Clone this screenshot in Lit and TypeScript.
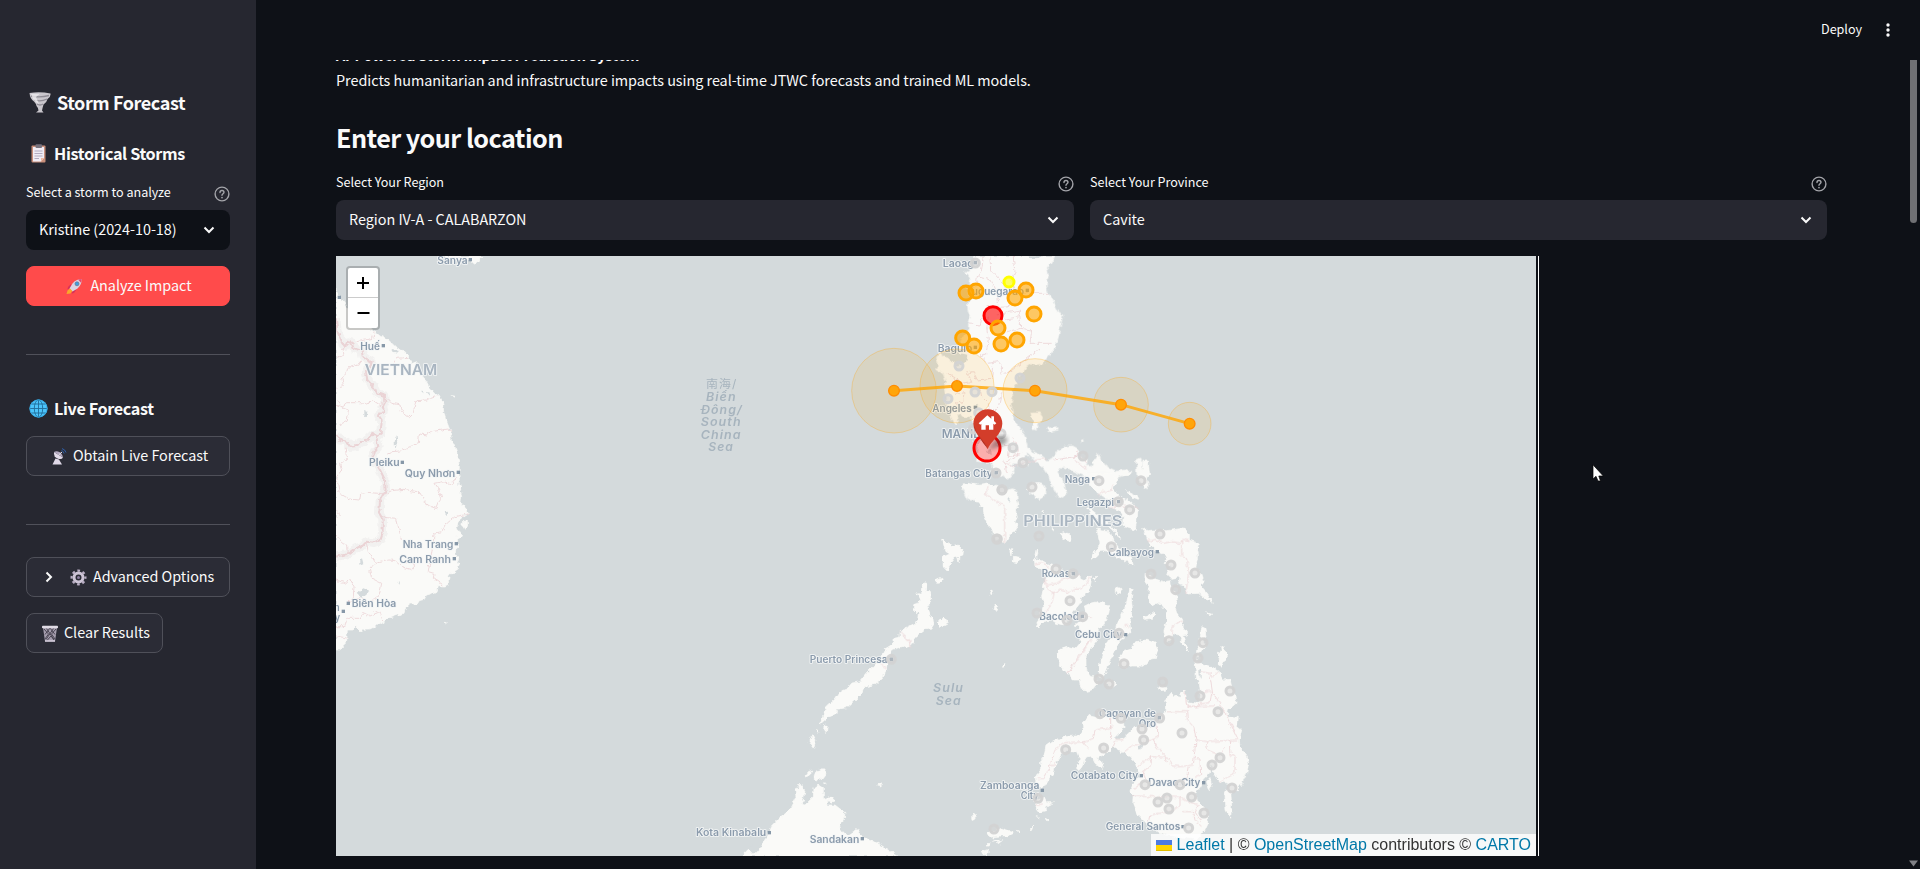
import { LitElement, html, svg, css } from "lit";
import { customElement, property } from "lit/decorators.js";

type Label = [number, number, number, string];
type Pt = [number, number];

interface Sheet {
  ox: number;
  oy: number;
  land: string[];
  water?: string[];
  borders?: string[];
  thick?: string[];
  labels: Label[];
  dots: Pt[];
  rings: Pt[];
}

/* Each sheet covers one part of the map in third-of-a-pixel units. */
const indochina: Sheet = {
  ox: 330, oy: 250,
  land: [
    "18,118 24,135 36,148 44,160 60,190 84,208 110,225 122,240 135,245 150,258 175,270 196,290 212,300 222,302 237,318 234,328 243,342 262,334 258,350 270,362 280,385 288,392 300,415 315,432 328,436 336,452 342,462 340,480 346,505 356,530 362,545 364,575 374,585 376,598 384,620 388,650 387,675 388,690 384,703 396,712 390,722 395,740 393,758 403,768 407,778 415,790 397,802 385,812 381,830 390,848 398,858 381,866 377,856 380,872 386,880 384,895 376,902 378,915 386,925 382,934 388,944 380,955 376,970 358,972 355,990 356,1005 345,1011 322,1010 318,1024 306,1030 290,1034 283,1048 268,1052 262,1062 240,1062 228,1070 222,1090 205,1094 180,1103 150,1122 120,1137 98,1138 92,1146 80,1130 66,1140 52,1140 50,1176 38,1188 30,1200 18,1200",
    "345,18 452,18 452,34 442,32 432,40 424,34 400,24 370,26 345,24",
    "398,815 412,812 413,828 404,838 396,826",
    "366,437 374,438 370,442", "343,1116 349,1118 346,1124",
  ],
  water: ["188,300 205,303 200,311 190,308", "80,1030 100,1015 118,1022 108,1036 94,1040", "103,482 112,486 110,500 103,495", "273,422 287,424 280,430", "290,425 300,428 297,434", "194,575 199,555 202,575 196,600", "205,1006 207,994 210,996", "88,930 96,925 100,940 88,944", "344,786 352,785 350,796"],
  borders: [
    "80,275 128,265 132,245", "18,325 40,318 35,300 60,280", "18,415 40,410 36,385 60,348 85,342 95,330",
    "18,465 35,470 50,458 95,458 110,462 130,452 150,465 160,458", "20,450 40,475 55,480 52,510 25,525",
    "165,440 185,460 210,465 215,485 235,500 250,485 258,452 290,450 325,437", "172,610 185,605 210,603 240,590 265,580 268,552 290,555 305,545 335,540 355,537 362,545",
    "190,340 200,325 235,322", "45,590 50,628 28,640 35,660 20,680 28,730 60,748 90,750 92,730 115,727 165,732 185,722 220,718 262,725 280,740 290,765 318,775 325,758 335,745 325,715 315,700 340,695 365,702 380,680",
    "160,802 200,805 205,830 215,870", "415,792 375,800 345,825 335,845 312,850 310,880 295,965 312,970 310,985 340,1005",
    "108,875 115,905 138,940 118,955 125,985 145,995 155,1000 148,1035 138,1048", "138,940 180,930 195,932 215,950 250,960 250,940 230,935", "18,990 50,1000 60,985 72,1010 70,1040 50,1060 80,1050 90,1040 105,1048 110,1058 140,1045",
    "18,1130 45,1130 50,1105 90,1105 100,1088 120,1098 150,1085 158,1110", "18,1158 50,1164", "18,782 28,792 20,803", "18,855 35,875 50,885 52,915",
  ],
  thick: [
    "18,205 22,245 38,280 45,290 52,275 65,278 72,295 95,302 98,318 125,338 108,365 112,390 135,415 140,430 165,437 166,455 158,470 163,485 145,495 155,510 152,550 138,560 145,590 130,608 132,630 150,660 165,690 167,720 150,750 148,790 158,808 158,850 152,868 130,878 110,875 95,890 78,895 55,912 18,920",
    "18,555 30,570 50,575 60,590 80,588 90,576 105,575 130,552 148,558",
  ],
  labels: [[322, 42, 91, "Sanya"], [91, 299, 59, "Huế"], [117, 649, 92, "Pleiku"], [224, 681, 152, "Quy Nhơn"], [218, 894, 152, "Nha Trang"], [208, 938, 155, "Cam Ranh"], [65, 1072, 134, "Biên Hòa"], [12, 1082, 17, "n"], [14, 1112, 16, "y"]],
  dots: [[421, 29], [28, 142], [160, 287], [217, 637], [385, 667], [379, 881], [373, 926], [55, 1060], [40, 1084]],
  rings: [],
};

const luzon: Sheet = {
  ox: 840, oy: 250,
  land: [
    "404,18 400,38 392,52 388,66 374,64 386,74 392,92 388,112 392,135 383,160 385,185 393,200 386,222 385,240 368,262 360,285 342,300 345,312 372,312 382,320 378,336 365,338 352,348 345,336 328,332 318,318 306,320 302,306 290,322 296,345 290,358 310,372 318,395 312,410 318,440 318,475 330,495 345,524 355,515 352,495 362,490 372,500 392,500 400,520 397,535 388,548 400,575 415,585 412,610 410,634 440,637 452,635 458,655 470,672 492,678 503,688 518,672 524,652 508,646 520,640 548,640 565,648 550,620 562,610 585,632 610,655 628,682 638,712 652,736 668,742 680,730 672,700 660,680 652,665 660,650 682,655 710,668 740,680 756,708 775,730 796,746 830,750 850,748 835,735 815,712 820,695 840,680 868,672 858,660 830,664 800,650 782,630 775,612 752,650 738,648 742,628 715,618 720,600 698,588 672,590 650,605 640,625 620,632 596,612 575,604 562,590 556,568 548,548 538,530 520,512 520,485 512,465 518,440 515,420 530,400 532,380 548,368 560,350 572,342 590,346 612,340 622,322 640,300 648,280 655,262 660,235 668,195 655,185 645,165 640,150 624,130 618,105 625,80 618,60 632,40 645,18",
    "570,490 600,488 608,500 600,518 590,520 595,530 582,540 578,530 585,515 572,500",
    "620,535 650,530 655,540 625,545", "720,575 728,568 730,575",
    "366,708 380,702 415,706 440,704 455,712 470,705 490,715 500,722 518,716 530,724 532,750 385,750 374,725",
    "570,705 590,698 612,705 618,720 610,740 598,748 585,738 565,725",
    "890,630 902,624 908,640 905,660 922,655 928,668 920,682 925,710 915,718 905,700 892,685 890,665",
    "780,668 795,662 805,678 790,684", "845,662 875,665 870,672 848,670",
  ],
  water: ["330,312 345,305 360,310 382,314 378,336 352,346 332,328", "565,18 605,18 600,24 575,25", "408,460 418,464 412,478", "440,600 452,596 455,612 446,616", "395,520 430,540 425,570 415,585 398,572 388,550"],
  borders: [
    "430,20 425,60 412,80 408,110 390,120", "450,20 452,60 490,100 500,130 480,145 470,160", "520,20 525,70 515,90 525,130 625,130", "412,80 450,90 470,130 472,155", "430,195 420,225 390,222", "440,170 500,168 542,160 542,130",
    "470,195 538,180 540,200 470,212", "540,200 542,235 502,245 490,250", "445,200 440,235 445,268 440,300", "542,235 575,240 570,280 635,280", "442,310 420,318 445,340 475,335 488,350 485,372 510,365 600,295",
    "320,372 350,385 360,400 395,395 380,370 400,365 412,390 455,385 458,350", "345,430 375,425 372,455 345,460", "420,415 425,440 445,460 450,500", "430,500 455,490 475,470 485,430", "470,590 510,585 505,620 545,610", "518,560 535,600 530,620 495,640 500,668", "715,602 710,620 695,622", "640,630 720,618 740,635",
  ],
  labels: [[308, 50, 94, "Laoag"], [378, 134, 174, "Tuguegarao"], [293, 305, 104, "Baguio"], [277, 486, 118, "Angeles"], [256, 681, 202, "Batangas City"], [674, 699, 76, "Naga"]],
  dots: [[406, 38], [562, 121], [406, 292], [406, 472], [469, 668], [761, 686]],
  rings: [[406, 39], [357, 348], [540, 384], [405, 426], [456, 425], [324, 446], [416, 488], [400, 537], [483, 551], [519, 593], [549, 638], [468, 669], [729, 618], [777, 692], [903, 692], [576, 711], [486, 720]],
};

const visayas: Sheet = {
  ox: 900, oy: 460,
  land: [
    "188,76 205,70 240,78 262,72 290,80 318,92 322,120 330,122 335,105 350,120 354,135 347,150 352,172 345,185 355,195 340,215 325,235 314,250 300,235 285,240 278,215 262,190 252,168 250,145 232,125 210,100",
    "398,72 412,68 420,75 434,85 432,100 418,116 405,104 400,98 382,90",
    "570,75 590,95 608,92 620,108 640,125 625,140 655,150 670,165 668,195 685,205 705,210 710,185 714,150 690,125 655,105 640,85 650,60 630,40 560,40",
    "560,145 575,150 600,170 625,195 645,210 662,235 652,228 635,208 610,190 575,165",
    "590,205 605,212 630,215 640,240 655,262 672,275 695,295 700,318 680,305 655,295 625,275 605,270 588,290 575,298 580,285 600,250",
    "477,222 490,215 508,222 513,238 505,243 488,235",
    "728,205 742,212 760,210 800,212 840,206 855,208 868,220 868,240 890,248 898,258 890,270 893,290 888,320 905,340 912,362 905,380 922,400 940,430 915,415 895,400 862,402 852,378 835,372 840,350 815,355 800,340 810,325 792,310 800,300 790,280 765,270 745,250 738,225",
    "735,340 765,358 790,365 812,362 815,385 830,400 832,425 825,440 832,462 848,478 846,500 862,510 862,525 848,528 866,572 855,562 835,525 820,520 812,540 800,545 792,515 800,480 795,450 780,430 755,438 745,420 748,385 735,365",
    "400,300 415,295 440,310 470,320 500,335 530,345 550,360 575,345 572,375 565,395 545,410 540,430 520,455 510,475 495,495 470,490 455,480 430,485 412,502 408,498 425,470 432,440 425,410 432,375 440,350 425,330 402,315",
    "550,440 570,430 590,425 615,430 630,440 625,465 612,490 595,510 590,540 575,560 560,580 555,605 560,630 572,660 520,660 505,640 490,625 475,595 472,575 490,565 525,570 545,550 540,520 538,500 525,495 545,480 555,462",
    "690,385 698,390 694,415 697,445 690,490 692,515 670,535 655,545 640,580 625,612 615,635 600,650 598,620 608,580 615,565 635,540 645,515 650,495 665,465 680,430 684,405",
    "670,575 700,565 710,545 740,540 765,550 773,570 765,595 745,600 725,618 700,615 680,618 662,605",
    "125,240 145,250 165,260 190,270 188,285 165,290 150,310 140,328 130,318 130,290 150,282 130,262",
    "72,368 80,372 78,400 90,400 92,420 80,440 85,460 100,480 98,495 75,510 50,530 30,555 0,565 0,515 25,500 45,490 62,478 68,460 55,450 45,440 60,420 55,405 65,395", "112,485 132,475 145,487 130,495 118,500",
    "330,265 338,268 336,280 330,278", "340,292 360,295 355,305 340,305", "408,270 414,275 410,292 405,285", "453,203 462,208 458,215", "425,152 431,153 428,158", "272,388 278,400 273,404", "285,432 293,440 287,452", "648,380 662,385 664,398 655,404 649,395", "730,468 750,465 762,455 768,462 755,475 735,478", "680,92 700,102 718,112 715,118 695,110", "730,0 745,0 748,45 725,60 728,35", "905,500 915,505 918,530 908,540 920,560 905,570 890,600 895,560 900,540", "965,560 975,570 985,590 975,595 965,612 955,615 958,595 968,580", "900,360 912,365 905,372", "918,450 925,460 938,462 932,468 920,462", "108,360 128,355 120,368 110,370", "580,355 590,352 586,365", "310,618 314,614 313,620", "885,605 905,620 935,620 960,635 965,660 890,660",
  ],
  borders: ["268,78 255,105 314,138 314,250", "402,312 425,308 440,315 445,328", "432,350 442,385 462,400 455,430 435,460 420,475", "442,375 470,370 485,360 500,355 540,345", "455,400 480,390 510,398 525,388 548,385 572,350", "595,105 610,95 632,95 635,75", "626,145 668,138 712,142", "740,245 765,238 790,250 815,245 840,250 850,238 868,242", "845,240 845,285 860,295 865,345 858,400", "500,640 540,590 572,540", "672,500 682,492 688,505", "548,470 575,472", "848,482 818,498 815,525", "0,515 30,545 32,560", "310,5 340,20 380,5 440,-5", "520,0 560,25"],
  water: ["325,112 332,112 330,126 323,122", "800,318 812,316 812,326 800,326"],
  labels: [[530, 137, 112, "Legazpi"], [625, 287, 137, "Calbayog"], [425, 352, 85, "Roxas"], [418, 480, 119, "Bacolod"], [525, 533, 142, "Cebu City"]],
  dots: [[656, 125], [772, 275], [520, 341], [547, 469], [677, 524]],
  rings: [[306, 89], [292, 237], [417, 228], [655, 125], [689, 149], [780, 222], [634, 260], [468, 327], [519, 341], [510, 422], [548, 470], [411, 459], [501, 481], [753, 342], [813, 315], [885, 339], [827, 389], [657, 520], [807, 542], [909, 548], [894, 594], [672, 611]],
};

const mindanao: Sheet = {
  ox: 980, oy: 640,
  land: [
    "232,40 240,28 262,22 285,28 300,10 308,-15 350,-15 325,20 318,50 318,90 330,108 350,118 352,130 335,150 318,154 302,145 298,118 275,105 255,95 238,75 240,60",
    "356,110 362,60 375,25 385,0 420,0 405,30 392,55 380,90 366,118",
    "420,50 430,40 455,30 462,10 490,0 525,10 532,30 525,50 505,60 490,78 460,78 430,82 418,68", "376,128 396,120 410,134 395,144",
    "645,60 662,70 690,78 712,92 728,120 750,118 755,140 765,165 768,190 745,210 742,228 775,232 772,260 785,270 778,300 780,318 800,345 806,370 800,400 785,430 770,452 752,458 755,490 752,535 738,510 735,465 748,430 720,425 700,395 690,370 688,400 672,415 662,440 648,455 655,485 680,510 684,545 670,575 650,600 610,592 560,585 520,570 495,545 470,520 458,490 460,465 450,455 460,430 478,410 470,375 452,350 430,338 400,320 380,340 350,355 372,372 368,385 345,370 335,348 318,352 310,375 298,390 288,380 300,360 290,335 262,330 242,345 230,370 222,395 200,425 188,445 170,440 165,412 182,390 182,365 192,345 198,318 220,302 255,290 290,288 312,275 310,245 330,228 360,235 385,215 430,235 432,260 420,280 408,298 430,295 455,270 480,255 510,262 530,245 555,215 558,180 572,160 595,172 615,150 620,185 655,190 662,165 658,130 660,110 650,90",
    "165,500 172,478 195,475 200,488 220,488 198,500 200,512 178,517", "728,18 740,40 745,48 728,60 722,82 715,70 722,50 712,40 728,30",
    "25,580 60,568 98,575 95,582 60,588 30,592", "40,600 60,598 55,605", "5,635 25,628 22,640 10,644", "112,568 118,572 114,576", "148,570 162,555 158,568", "536,140 560,140 556,150 542,152", "680,425 690,412 696,440 688,452", "608,0 628,36 615,22", "172,530 178,532 174,534", "68,80 72,75 72,80", "195,538 205,542 200,545",
  ],
  water: ["470,320 490,312 492,325 475,328", "655,88 662,90 662,110 656,106", "430,270 410,290 405,298 418,296 436,280"],
  borders: ["330,0 262,98", "662,95 690,100 700,110 715,95", "690,110 698,160 728,200 742,230 775,300", "615,155 620,198 655,200 660,192 690,188 695,160 685,150 665,160", "558,215 620,215 622,240 642,262 648,300 680,305 773,300", "620,200 705,198", "392,230 392,298", "400,262 345,270 340,295 310,308 325,325", "318,305 255,308 225,330 205,390 190,415 170,415", "398,325 408,298 430,300", "430,338 455,318 520,298 530,320 560,352 580,378 600,380 640,375 648,300", "530,250 535,290 520,298", "475,378 515,350 555,352 560,370", "480,430 470,445 460,447", "455,468 600,472 600,495 580,512 510,525 505,545", "515,350 512,375 490,395 500,430", "660,355 662,405 645,412", "645,355 662,358", "680,305 682,330 718,345 735,325", "748,300 750,345 765,350 765,400 718,425", "600,435 620,410 625,380", "600,472 625,485 655,495 645,515 662,545", "608,515 640,515 645,540 665,560", "208,375 225,372", "167,495 185,495"],
  labels: [[357, 230, 171, "Cagayan de"], [476, 261, 52, "Oro"], [272, 418, 203, "Cotabato City"], [505, 439, 156, "Davao City"], [0, 447, 178, "Zamboanga"], [122, 477, 54, "City"], [377, 571, 224, "General Santos"]],
  dots: [[538, 233], [484, 407], [671, 428], [187, 451], [609, 560]],
  rings: [[357, 117], [387, 132], [548, 126], [660, 168], [750, 153], [714, 215], [360, 221], [423, 235], [539, 234], [486, 267], [491, 300], [606, 279], [257, 329], [371, 324], [720, 353], [696, 375], [495, 434], [600, 434], [756, 444], [561, 474], [534, 486], [567, 507], [635, 471], [672, 519], [626, 564], [174, 475], [42, 567]],
};

const palawan: Sheet = {
  ox: 680, oy: 530,
  land: [
    "734,155 740,160 738,185 752,185 748,210 738,225 748,245 750,262 762,282 752,298 735,298 718,308 705,325 695,345 660,352 640,358 628,380 622,415 605,445 588,460 570,468 552,470 545,490 525,510 500,533 470,538 468,552 445,560 421,582 430,555 440,530 465,508 480,485 500,478 515,460 540,455 560,430 580,410 600,388 618,355 642,340 642,325 665,320 670,298 682,305 695,290 712,278 715,250 700,235 702,222 718,232 722,208 710,188 724,190 725,170",
    "785,28 800,40 820,50 835,45 850,62 848,75 825,78 810,72 798,65 792,48", "790,85 805,88 812,105 802,120 790,105", "832,78 840,75 838,98", "765,150 785,142 785,155 772,158", "772,275 790,265 804,272 790,282 778,292",
    "432,588 442,585 440,605 430,600", "410,598 420,608 412,606", "398,612 408,630 400,655 388,638", "376,738 385,725 398,720 392,732", "402,742 410,722 430,716 438,732 428,745 410,750",
    "186,978 205,958 215,968 235,968 245,945 260,925 275,890 300,865 330,838 348,800 346,780 360,762 375,785 370,810 362,822 375,825 400,800 402,775 415,765 430,775 430,800 445,810 440,825 465,825 495,848 493,870 478,885 485,905 505,915 520,905 532,895 545,920 575,930 610,950 650,978",
    "442,808 455,800 464,812 450,818", "590,765 600,760 604,768", "434,758 442,762 436,764", "875,860 882,852 886,866 876,868", "930,188 936,180 938,192", "942,235 950,226 948,242", "925,910 965,895 998,905 985,918 935,916", "918,948 930,936 928,948", "908,970 925,962 920,975", "955,938 968,932 962,942", "968,412 974,404 972,410", "990,55 998,60 996,78", "1000,95 1015,93 1012,98",
  ],
  water: ["205,945 212,942 214,950"],
  borders: ["668,315 688,335 690,348", "600,402 622,415"],
  labels: [[389, 399, 234, "Puerto Princesa"], [48, 918, 211, "Kota Kinabalu"], [389, 938, 149, "Sandakan"]],
  dots: [[634, 388], [268, 908], [547, 926]],
  rings: [[950, 27], [634, 388]],
};

const sheets = [indochina, luzon, visayas, mindanao, palawan];

const orange: Pt[] = [[378, 129], [408, 123], [558, 120], [525, 144], [582, 192], [474, 234], [368, 264], [402, 288], [483, 282], [531, 270]];
const track: [number, number, number][] = [[162, 422, 127], [351, 408, 111], [585, 422, 96], [843, 464, 82], [1049, 521, 64]];

const place = (s: Sheet) => `translate(${s.ox} ${s.oy}) scale(.33333)`;
const text3 = (cls: string, x: number, y: number, len: number, t: string) =>
  svg`<text class=${cls} x=${x} y=${y} textLength=${len} lengthAdjust="spacingAndGlyphs">${t}</text>`;

@customElement("storm-map")
export class StormMap extends LitElement {
  static styles = css`
    :host { display: block; position: relative; width: 1200px; height: 600px; overflow: hidden; background: #d4dadc; letter-spacing: normal; }
    .canvas { display: block; }
    .land { fill: #fafaf8; stroke: #fafaf8; stroke-width: 2; stroke-linejoin: round; }
    .water { fill: #d4dadc; }
    .border { fill: none; stroke: #edd5d8; stroke-width: 2.6; stroke-linejoin: round; }
    .halo { fill: none; stroke: #f2f1f0; stroke-width: 26; stroke-linejoin: round; }
    .frontier { fill: none; stroke: #ead3d5; stroke-width: 6; stroke-linejoin: round; }
    .city, .country, .sea, .capital { font-family: Inter, "Noto Sans", sans-serif; paint-order: stroke; stroke: #f4f6f6; stroke-width: 5; stroke-linejoin: round; }
    .city { font-size: 29px; font-weight: 600; fill: #8b9bac; }
    .capital { font-size: 36px; font-weight: 600; fill: #8b9bac; }
    .country { font-size: 44px; font-weight: 600; fill: #a9b5c1; }
    .sea { font-size: 35px; font-weight: 600; font-style: italic; fill: #a7b4be; stroke: none; letter-spacing: 3px; font-family: Inter, "Noto Sans CJK SC", sans-serif; }
    .han { font-style: normal; font-weight: 400; }
    .dot { fill: #8798a8; }
    .ring { fill: #d3d3d3; fill-opacity: .5; stroke: #d3d3d3; stroke-width: 9; stroke-opacity: .95; }
    .cone { fill: #ffa500; fill-opacity: .11; stroke: #ffa500; stroke-opacity: .3; stroke-width: 3; }
    .path { fill: none; stroke: #ffa500; stroke-opacity: .8; stroke-width: 9; stroke-linejoin: round; }
    .fix { fill: #ffa50a; stroke: #ff8c00; stroke-width: 4; }
    .mid { fill: #ffa500; fill-opacity: .6; stroke: #ffa500; stroke-width: 9; }
    .high { fill: red; fill-opacity: .6; stroke: red; stroke-width: 9; }
    .low { fill: #ff0; fill-opacity: .6; stroke: #ff0; stroke-width: 9; }
    .home { fill: red; fill-opacity: .3; stroke: red; stroke-width: 9; }
    .zoom { position: absolute; left: 10px; top: 10px; width: 30px; border: 2px solid rgba(0, 0, 0, .2); border-radius: 4px; background-clip: padding-box; background-color: #fff; }
    .zoom-key { display: flex; align-items: center; justify-content: center; box-sizing: border-box; height: 30px; }
    .zoom-key:first-child { border-bottom: 1px solid #ccc; }
    .credit { position: absolute; right: 0; bottom: 0; display: flex; align-items: center; height: 22px; padding: 0 5px; background: rgba(255, 255, 255, .8); font: 16px/22px "Liberation Sans", Arial, sans-serif; color: #333; white-space: pre; }
    .link { color: #0078a8; }
    .flag { margin-right: 4px; }
  `;

  render() {
    return html`
      <svg class="canvas" width="1200" height="600" viewBox="336 256 1200 600">
        <defs>
          <filter id="coast" x="0" y="0" width="100%" height="100%">
            <feTurbulence type="fractalNoise" baseFrequency=".22" numOctaves="2" seed="4" />
            <feDisplacementMap in="SourceGraphic" scale="5" xChannelSelector="R" yChannelSelector="G" />
          </filter>
          <filter id="soft"><feGaussianBlur stdDeviation="6" /></filter>
        </defs>
        <g filter="url(#coast)">
          ${sheets.map((s) => svg`<g transform=${place(s)}>${s.land.map((p) => svg`<polygon class="land" points=${p} />`)}</g>`)}
          ${sheets.map((s) => svg`<g transform=${place(s)}>
            ${(s.water ?? []).map((p) => svg`<polygon class="water" points=${p} />`)}
            ${(s.thick ?? []).map((p) => svg`<polyline class="halo" points=${p} />`)}
            ${(s.thick ?? []).map((p) => svg`<polyline class="frontier" points=${p} />`)}
            ${(s.borders ?? []).map((p) => svg`<polyline class="border" points=${p} />`)}</g>`)}
        </g>
        ${sheets.map((s) => svg`<g transform=${place(s)}>
          ${s.labels.map(([x, y, l, t]) => text3("city", x, y, l, t))}
          ${s.dots.map(([x, y]) => svg`<rect class="dot" x=${x - 5} y=${y - 5} width="10" height="10" />`)}</g>`)}
        <g transform=${place(indochina)}>
          ${text3("country", 104, 376, 218, "VIETNAM")}
          ${text3("sea han", 1128, 415, 94, "南海/")}
          ${text3("sea", 1128, 452, 92, "Biển")}
          ${text3("sea", 1112, 491, 126, "Đông/")}
          ${text3("sea", 1112, 528, 123, "South")}
          ${text3("sea", 1112, 566, 123, "China")}
          ${text3("sea", 1135, 603, 77, "Sea")}
        </g>
        <g transform=${place(visayas)}>${text3("country", 370, 197, 297, "PHILIPPINES")}</g>
        <g transform=${place(palawan)}>${text3("sea", 759, 487, 93, "Sulu")}${text3("sea", 767, 524, 78, "Sea")}</g>
        <g transform=${place(luzon)}>
          ${text3("capital", 305, 563, 140, "MANILA")}
          ${track.map(([x, y, r]) => svg`<circle class="cone" cx=${x} cy=${y} r=${r} />`)}
          <polyline class="path" points=${track.map(([x, y]) => `${x},${y}`).join(" ")} />
        </g>
        ${sheets.map((s) => svg`<g transform=${place(s)}>${s.rings.map(([x, y]) => svg`<circle class="ring" cx=${x} cy=${y} r="12" />`)}</g>`)}
        <g transform=${place(luzon)}>
          ${track.map(([x, y]) => svg`<circle class="fix" cx=${x} cy=${y} r="16" />`)}
          <circle class="high" cx="459" cy="197" r="27" />
          ${orange.map(([x, y]) => svg`<circle class="mid" cx=${x} cy=${y} r="21" />`)}
          <circle class="low" cx="507" cy="96" r="15" />
          <circle class="home" cx="441" cy="594" r="39" />
          <path d="M444 600L468 568Q492 550 502 566Q506 580 480 588Z" fill="#333" opacity=".45" filter="url(#soft)" />
          <path d="M443 598C437 575 400 552 400 521A43 43 0 0 1 487 521C487 552 450 575 443 598Z" fill="#d33d2a" />
          <path d="M443 596C438 575 403 552 402 524Q412 560 443 596Z" fill="#b32e20" />
          <path d="M442 496L454 506V499H462V513L469 520L464 524L460 521V539H447V526H437V539H424V521L421 524L416 520Z" fill="#fff" />
        </g>
      </svg>
      <div class="zoom">
        <div class="zoom-key"><svg width="14" height="14" viewBox="0 0 14 14"><path d="M1 7H13M7 1V13" stroke="#000" stroke-width="2" /></svg></div>
        <div class="zoom-key"><svg width="14" height="14" viewBox="0 0 14 14"><path d="M1.500 7H13.500" stroke="#000" stroke-width="2" /></svg></div>
      </div>
      <div class="credit"><svg class="flag" width="17" height="11" viewBox="0 0 17 11"><path d="M0 0H16V6H0Z" fill="#4c7be1" /><path d="M0 5H16V10H0Z" fill="#ffd500" /><path d="M0 10H16V11H0Z" fill="#e0bc00" /></svg><span class="link">Leaflet</span> | © <span class="link">OpenStreetMap</span> contributors © <span class="link">CARTO</span></div>
    `;
  }
}

const help = html`<svg width="16" height="16" viewBox="0 0 16 16" fill="none" stroke="#a3a4a9" stroke-width="1.4" stroke-linecap="round"><circle cx="8" cy="8" r="6.9" /><path d="M6 6.500C6 5.300 6.900 4.500 8 4.500S10 5.200 10 6.300C10 7.600 8 7.800 8 9.300" /><path d="M8 11.500V11.600" stroke-width="1.700" /></svg>`;
const chevron = html`<svg width="12" height="8" viewBox="0 0 12 8" fill="none" stroke="#fafafa" stroke-width="2"><path d="M1.500 1.500L6 6L10.500 1.500" /></svg>`;

@customElement("select-field")
export class SelectField extends LitElement {
  @property() label = "";
  @property() value = "";
  @property() tone = "light";
  static styles = css`
    :host { display: block; min-width: 0; }
    .top { display: flex; justify-content: space-between; align-items: center; height: 24px; margin-bottom: 4px; }
    .label { font-size: 12.600px; line-height: 20px; padding-bottom: 4px; white-space: nowrap; }
    .help { display: flex; }
    .box { display: flex; justify-content: space-between; align-items: center; box-sizing: border-box; height: 40px; padding: 0 15px 0 13px; border-radius: 8px; background: #262730; font-size: 14.400px; letter-spacing: -.03px; }
    .value { line-height: 20px; padding-bottom: 2px; }
    .dark { background: #0e1117; }
  `;
  render() {
    return html`
      <div class="top"><span class="label">${this.label}</span><span class="help">${help}</span></div>
      <div class="box ${this.tone === "dark" ? "dark" : ""}"><span class="value">${this.value}</span>${chevron}</div>`;
  }
}

const tornado = html`<svg width="22" height="21" viewBox="0 0 22 21"><path d="M.5 1Q11-.5 21.500 1.500Q22 5 18.500 7Q18 10 14.500 12.500Q13.500 16 13 18.500L14.500 20.500H7L9.500 18.500Q9.500 16 7.500 14Q7 11.500 5 9.500Q1 7 .5 1Z" fill="#c9c6cc" /><path d="M2 4Q11 6 20 3.500M5 8Q12 10 18 7M8 12Q11 14 14 12" stroke="#8e8b94" stroke-width="1.300" fill="none" /><path d="M2 1.800H11L7 5L10 12L8 11L4 7Z" fill="#eceaee" opacity=".8" /></svg>`;
const clipboard = html`<svg width="16" height="19" viewBox="0 0 16 19"><rect x=".5" y="1.500" width="14" height="17" rx="1" fill="#c98f7a" /><path d="M2 3H13V14L10 17.500H2Z" fill="#f1edf5" /><path d="M13 14L10 17.500V14Z" fill="#f0b8a0" /><rect x="4.500" y=".3" width="6.500" height="3.700" rx="1" fill="#77727d" /><path d="M3.500 7H11.500M3.500 9.500H11.500M3.500 12H11.500M3.500 14.500H8" stroke="#b3abc0" /></svg>`;
const globe = html`<svg width="19" height="19" viewBox="0 0 19 19" fill="none"><circle cx="9.500" cy="9.500" r="9" fill="#4cc4fa" /><g stroke="#1f6c98" stroke-width=".9"><ellipse cx="9.500" cy="9.500" rx="4.200" ry="8.600" /><path d="M9.500 .8V18.200M.8 9.500H18.200M2.200 5H16.800M2.200 14H16.800" /><circle cx="9.500" cy="9.500" r="8.600" stroke="#36a9e4" /></g></svg>`;
const rocket = html`<svg width="17" height="17" viewBox="0 0 17 17"><path d="M5 6L2 9L1.500 11.500L5 10Z" fill="#d8315b" /><path d="M10.500 11.500L8 15L5.800 15.500L6.500 12Z" fill="#d8315b" /><path d="M15.500 1Q10 1 6.500 5.500L3.500 10.500L6.500 13.500L11.500 10.500Q16 6.500 15.500 1Z" fill="#d9d4e3" /><path d="M15.500 1Q13.500 1 12 1.500L15 4.800Q15.600 3 15.500 1Z" fill="#e6476b" /><circle cx="11" cy="5.800" r="2" fill="#3a9fe0" stroke="#6b6f86" stroke-width=".7" /><path d="M4 10.500L1.500 12.500L.5 16L4.500 15.500L6.300 13Z" fill="#f9a72b" /></svg>`;
const dish = html`<svg width="15" height="17" viewBox="0 0 15 17"><path d="M2 4Q1.500 9 5.500 10.500Q9.500 12 11 9.500Z" fill="#e2dbe9" /><path d="M2 4L11 9.500Q10 4.500 6 3.500Q3.500 3 2 4Z" fill="#b3a9c0" /><path d="M6.500 7L10 4" stroke="#e8e4ee" /><path d="M3.500 10.500L.5 16.500H10L7 11.500Z" fill="#e0d9e8" /><path d="M9.500 2.500A3.500 3.500 0 0 1 12 5.500M10 .6A5.500 5.500 0 0 1 14 4.500" stroke="#2f5fa8" fill="none" /></svg>`;
const gear = html`<svg width="17" height="17" viewBox="0 0 17 17" fill="none"><circle cx="8.500" cy="8.500" r="6.900" stroke="#b9aec4" stroke-width="2.200" stroke-dasharray="2.700 2.719" stroke-dashoffset="1.350" /><circle cx="8.500" cy="8.500" r="4.500" stroke="#cdc4d6" stroke-width="3" /><circle cx="8.500" cy="8.500" r="1.500" fill="#8e7fa0" /></svg>`;
const basket = html`<svg width="16" height="17" viewBox="0 0 16 17"><path d="M1 2.500H15L13 16.500H3Z" fill="#a59eae" /><path d="M2 4L6.500 9L3 14M14 4L9.500 9L13 14M4.500 3.500L12 14.500M11.500 3.500L4 14.500M8 3L13 9.500M8 3L3 9.500M5 15.500L9 11L12 15" stroke="#3f3b48" stroke-width=".9" fill="none" /><rect x="0" y=".8" width="16" height="2.400" rx=".8" fill="#e0dce6" /><path d="M3 15.300H13V16.700H3Z" fill="#d8d2e0" /></svg>`;

@customElement("app-root")
export class AppRoot extends LitElement {
  static styles = css`
    :host { display: grid; grid-template-columns: 256px 1fr; height: 869px; overflow: hidden; position: relative; background: #0e1117; color: #fafafa; font-family: "Noto Sans CJK JP", "Noto Sans CJK SC", sans-serif; font-size: 14.400px; letter-spacing: -.03px; }
    .side { background: #262730; padding: 87px 26px 0; display: flex; flex-direction: column; }
    .h1, .h2 { display: flex; align-items: center; font-weight: 700; white-space: nowrap; }
    .h1 { font-size: 18px; height: 30px; padding-left: 3px; gap: 6px; letter-spacing: -.42px; }
    .h2 { font-size: 16.200px; height: 30px; padding-left: 3px; gap: 7px; letter-spacing: -.36px; }
    .hist { margin: 21px 0 14px; padding-left: 5px; }
    .live { margin: 38px 0 13px; gap: 6px; }
    .btn { display: flex; align-items: center; justify-content: center; box-sizing: border-box; height: 40px; border: 1px solid #4f5059; border-radius: 8px; background: #2b2c36; gap: 6px; white-space: nowrap; }
    .cap { line-height: 20px; padding-bottom: 2px; }
    .primary { margin-top: 16px; background: #ff4b4b; border-color: #ff4b4b; gap: 7px; padding-left: 2px; }
    .live-btn { gap: 6px; padding-left: 4px; }
    .rule { height: 1px; background: #50515a; }
    .r1 { margin-top: 48px; }
    .r2 { margin: 48px 0 32px; }
    .adv { justify-content: flex-start; padding-left: 18px; }
    .adv-caret { margin-right: 11px; }
    .clear { width: 137px; margin-top: 16px; gap: 6px; padding-left: 3px; }
    .main { display: flex; flex-direction: column; min-width: 0; }
    .header { display: flex; align-items: center; justify-content: flex-end; height: 60px; box-sizing: border-box; padding-right: 30px; gap: 24px; font-size: 12.600px; }
    .deploy { line-height: 20px; padding-bottom: 2px; }
    .body { height: 809px; overflow: hidden; padding: 0 93px 0 80px; box-sizing: border-box; }
    .lead { margin: -18px 0 0; line-height: 25px; white-space: nowrap; }
    .strong { font-weight: 700; display: block; letter-spacing: -.26px; }
    .title { margin: 27px 0 17px; font-size: 25.200px; line-height: 36px; font-weight: 700; letter-spacing: -.54px; }
    .fields { display: grid; grid-template-columns: 738px 737px; gap: 16px; margin-bottom: 16px; }
    .frame { display: flex; width: 1203px; border-right: 1px solid #fff; box-sizing: border-box; }
    .bar { position: absolute; left: 1910px; top: 60px; width: 7px; height: 163px; border-radius: 0 0 4px 4px; background: #6f7074; }
    .down { position: absolute; left: 1909px; top: 860px; }
    .pointer { position: absolute; left: 1592px; top: 464px; }
  `;

  render() {
    return html`
      <aside class="side">
        <div class="h1">${tornado}<span>Storm Forecast</span></div>
        <div class="h2 hist">${clipboard}<span>Historical Storms</span></div>
        <select-field label="Select a storm to analyze" value="Kristine (2024-10-18)" tone="dark"></select-field>
        <div class="btn primary">${rocket}<span class="cap">Analyze Impact</span></div>
        <div class="rule r1"></div>
        <div class="h2 live">${globe}<span>Live Forecast</span></div>
        <div class="btn live-btn">${dish}<span class="cap">Obtain Live Forecast</span></div>
        <div class="rule r2"></div>
        <div class="btn adv"><svg class="adv-caret" width="8" height="12" viewBox="0 0 8 12" fill="none" stroke="#fafafa" stroke-width="2"><path d="M1.500 1.500L6 6L1.500 10.500" /></svg>${gear}<span class="cap">Advanced Options</span></div>
        <div class="btn clear">${basket}<span class="cap">Clear Results</span></div>
      </aside>
      <main class="main">
        <div class="header"><span class="deploy">Deploy</span><svg width="4" height="14" viewBox="0 0 4 14" fill="#fafafa"><circle cx="2" cy="2" r="1.700" /><circle cx="2" cy="7" r="1.700" /><circle cx="2" cy="12" r="1.700" /></svg></div>
        <div class="body">
          <p class="lead"><span class="strong">AI-Powered Storm Impact Prediction System</span>Predicts humanitarian and infrastructure impacts using real-time JTWC forecasts and trained ML models.</p>
          <h2 class="title">Enter your location</h2>
          <div class="fields">
            <select-field label="Select Your Region" value="Region IV-A - CALABARZON"></select-field>
            <select-field label="Select Your Province" value="Cavite"></select-field>
          </div>
          <div class="frame"><storm-map></storm-map></div>
        </div>
      </main>
      <div class="bar"></div>
      <svg class="down" width="9" height="7" viewBox="0 0 9 7"><path d="M0 .5H9L4.500 6.500Z" fill="#808186" /></svg>
      <svg class="pointer" width="12" height="18" viewBox="0 0 12 18"><path d="M1 .8V15L4 12.300L6 17H8.500L6.800 12H11.300Z" fill="#fff" stroke="#000" stroke-width=".7" /></svg>
    `;
  }
}
